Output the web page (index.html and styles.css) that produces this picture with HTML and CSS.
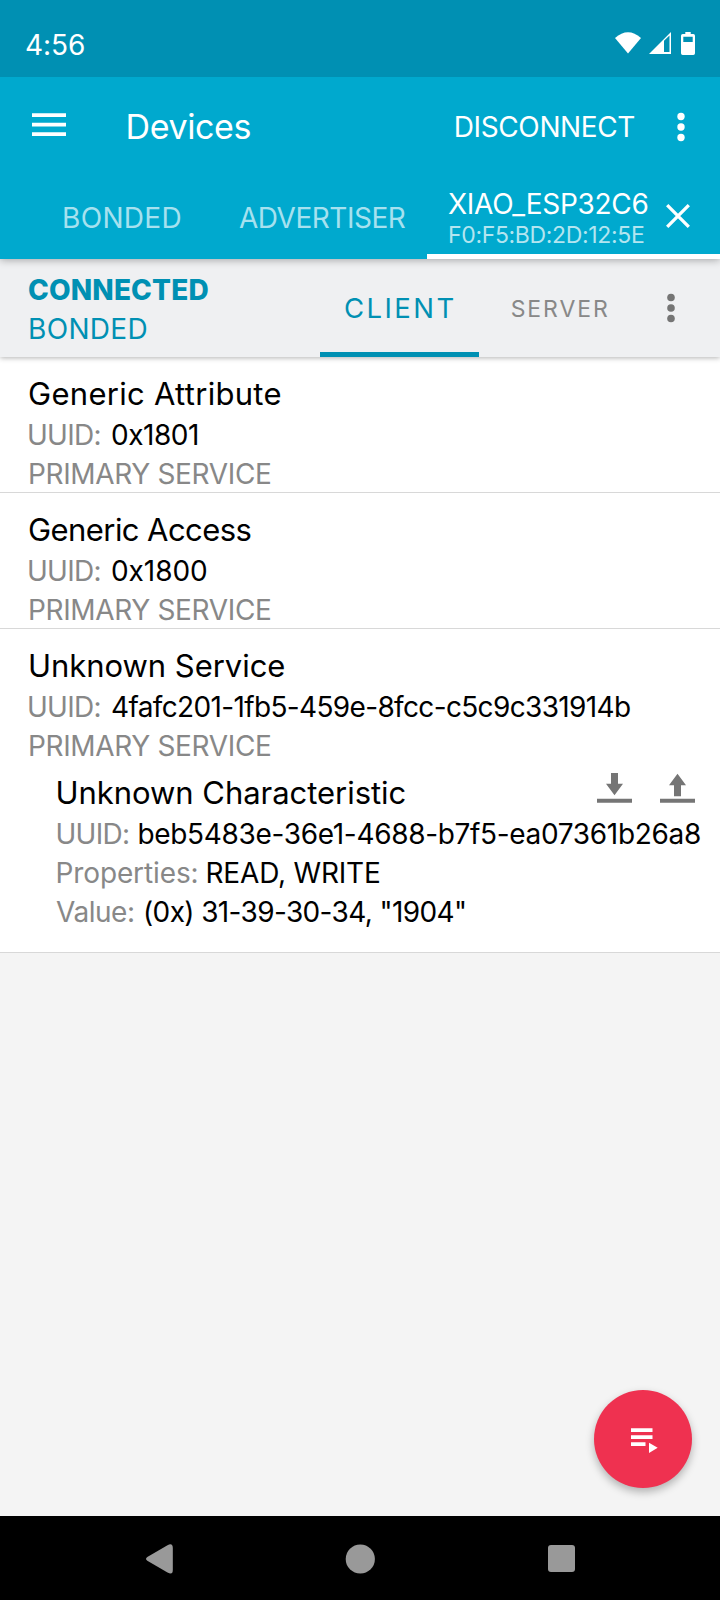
FILE: index.html
```html
<!DOCTYPE html>
<html lang="en">
<head>
<meta charset="utf-8">
<title>Devices</title>
<link rel="stylesheet" href="styles.css">
</head>
<body>
<div class="screen">
  <div class="status-bar">
    <span class="clock">4:56</span>
    <svg class="status-icons" width="82" height="24" viewBox="0 0 82 24" fill="#fff">
      <path d="M0 6Q13 -5.400 26 6L13 21.600Z"/>
      <path fill-rule="evenodd" d="M34 22L56 0V22ZM49 8.700V20H54.500V3.600Z"/>
      <path fill-rule="evenodd" d="M70.300 0H75.700V2H78.300Q80 2 80 3.700V21.300Q80 23 78.300 23H67.700Q66 23 66 21.300V3.700Q66 2 67.700 2H70.300ZM68.300 4.700V10H77.700V4.700Z"/>
    </svg>
  </div>

  <header class="header">
    <div class="toolbar">
      <svg class="menu" width="34" height="24" viewBox="0 0 34 24" fill="#fff"><path d="M0 .2H34V4H0ZM0 9.700H34V13.500H0ZM0 19.200H34V23H0Z"/></svg>
      <h1 class="title">Devices</h1>
      <span class="disconnect">DISCONNECT</span>
      <svg class="dots" width="8" height="30" viewBox="0 0 8 30" fill="#fff"><circle cx="4" cy="4.500" r="3.700"/><circle cx="4" cy="15" r="3.700"/><circle cx="4" cy="25.500" r="3.700"/></svg>
    </div>
    <nav class="tabs">
      <span class="tab bonded-tab">BONDED</span>
      <span class="tab advertiser-tab">ADVERTISER</span>
      <div class="device-tab">
        <div>
          <div class="device-name">XIAO_ESP32C6</div>
          <div class="device-mac">F0:F5:BD:2D:12:5E</div>
        </div>
        <svg class="close" width="24" height="24" viewBox="0 0 24 24" stroke="#fff" stroke-width="3.300"><path d="M1.200 1.200L22.800 22.800M22.800 1.200L1.200 22.800"/></svg>
      </div>
    </nav>
  </header>

  <section class="subheader">
    <div class="state">
      <div class="connection">CONNECTED</div>
      <div class="bond">BONDED</div>
    </div>
    <div class="mode client">CLIENT</div>
    <div class="mode server">SERVER</div>
    <svg class="dots" width="8" height="30" viewBox="0 0 8 30" fill="#757575"><circle cx="4" cy="4.500" r="3.800"/><circle cx="4" cy="15" r="3.800"/><circle cx="4" cy="25.500" r="3.800"/></svg>
  </section>

  <main class="list">
    <article class="service">
      <h2 class="name attribute">Generic Attribute</h2>
      <p class="line"><span class="label uuid">UUID:</span><span class="short-id tight">0x1801</span></p>
      <p class="line label kind">PRIMARY SERVICE</p>
    </article>
    <article class="service">
      <h2 class="name access">Generic Access</h2>
      <p class="line"><span class="label uuid">UUID:</span><span class="short-id">0x1800</span></p>
      <p class="line label kind">PRIMARY SERVICE</p>
    </article>
    <article class="service last">
      <h2 class="name">Unknown Service</h2>
      <p class="line"><span class="label uuid">UUID:</span><span class="service-id">4fafc201-1fb5-459e-8fcc-c5c9c331914b</span></p>
      <p class="line label kind">PRIMARY SERVICE</p>
      <div class="characteristic">
        <div class="char-head">
          <h3 class="name">Unknown Characteristic</h3>
          <svg class="transfer" width="98" height="30" viewBox="0 0 98 30" fill="#757575">
            <path d="M14 0H21V10.700H26L17.500 22.300L9 10.700H14ZM0 25.700H35V29.700H0Z"/>
            <path d="M80.500 .700L89 12.300H84V23.300H77V12.300H72ZM63 25.700H98V29.700H63Z"/>
          </svg>
        </div>
        <p class="line"><span class="label uuid">UUID:</span><span class="char-id">beb5483e-36e1-4688-b7f5-ea07361b26a8</span></p>
        <p class="line"><span class="label properties">Properties:</span><span class="access-modes">READ, WRITE</span></p>
        <p class="line"><span class="label value-label">Value:</span><span class="value">(0x) 31-39-30-34, "1904"</span></p>
      </div>
    </article>
  </main>

  <div class="canvas">
    <div class="fab">
      <svg width="28" height="26" viewBox="0 0 28 26" fill="#fff"><path d="M0 .300H21.500V4H0ZM0 7.300H21.500V11H0ZM0 14.300H14.500V18H0ZM18 14.700L26.700 19.800L18 25Z"/></svg>
    </div>
  </div>

  <nav class="nav-bar">
    <svg width="27" height="30" viewBox="0 0 27 30" fill="#999"><path d="M1.300 13L21.500 1.200Q26.800 -1.500 26.800 4V26Q26.800 31.500 21.500 28.500L1.300 16.800Q-1.300 14.900 1.300 13Z"/></svg>
    <svg width="30" height="30" viewBox="0 0 30 30" fill="#999"><circle cx="14.300" cy="15" r="14.600"/></svg>
    <svg width="27" height="27" viewBox="0 0 27 27" fill="#999"><rect width="27" height="27" rx="3"/></svg>
  </nav>
</div>
</body>
</html>
```

FILE: styles.css
```css
* { box-sizing: border-box; }
body { margin: 0; font-family: Inter, "Liberation Sans", sans-serif; font-size: 28px; color: #000; }
h1, h2, h3, p { margin: 0; font-weight: 400; }
svg { display: block; flex: none; overflow: visible; }
.screen { width: 720px; height: 1600px; display: flex; flex-direction: column; overflow: hidden; background: #f4f4f4; white-space: nowrap; }

.status-bar { height: 77px; flex: none; padding: 28px 23px 0 25px; display: flex; justify-content: space-between; align-items: flex-start; background: #0090b3; color: #fff; z-index: 3; }
.clock { line-height: 34px; letter-spacing: -.06px; }
.status-icons { margin-top: 4px; }

.header { flex: none; height: 182px; background: #00a9ce; color: #fff; box-shadow: 0 1px 8px rgba(0, 0, 0, .32); z-index: 2; }
.toolbar { height: 99px; display: flex; align-items: center; padding: 0 35px 0 32px; }
.menu { margin-bottom: 3px; }
.title { margin-left: 59.500px; font-size: 34px; line-height: 40px; letter-spacing: -.38px; }
.disconnect { margin-left: auto; line-height: 34px; letter-spacing: -.39px; }
.toolbar .dots { margin-left: 42px; }
.tabs { height: 83px; display: flex; padding-left: 62px; }
.tab { line-height: 85px; color: #a6e1ef; }
.bonded-tab { width: 177px; letter-spacing: .33px; }
.advertiser-tab { width: 188px; letter-spacing: -.48px; }
.device-tab { flex: 1; display: flex; padding: 12px 0 0 21px; border-bottom: 5px solid #fff; }
.device-name { line-height: 32px; letter-spacing: -.27px; }
.device-mac { font-size: 23px; line-height: 30px; letter-spacing: -.34px; color: #b3e5f0; }
.close { margin: 16px 0 0 17px; }

.subheader { flex: none; height: 98px; padding: 0 45px 0 28px; display: flex; align-items: center; background: #eff0f2; box-shadow: 0 1px 5px rgba(0, 0, 0, .3); z-index: 1; }
.state { width: 292px; padding-top: 4px; line-height: 39px; color: #0090b3; }
.connection { font-weight: 800; letter-spacing: .14px; }
.bond { letter-spacing: .33px; }
.mode { line-height: 98px; height: 98px; }
.client { width: 159px; padding-left: 24px; border-bottom: 5px solid #0090b3; color: #0090b3; font-size: 27.5px; line-height: 99px; letter-spacing: 2.45px; }
.server { padding-left: 31.700px; font-size: 23px; letter-spacing: 1.92px; line-height: 101px; color: #888; }
.subheader .dots { margin-left: auto; }

.list { flex: none; background: #fff; }
.service { height: 136px; padding: 16px 0 0 28px; border-bottom: 1px solid #d8d8d8; }
.service.last { height: 324px; }
.name { font-size: 31px; line-height: 42px; letter-spacing: -.04px; }
.attribute { letter-spacing: .29px; }
.access { letter-spacing: -.57px; }
.line { display: flex; height: 39px; line-height: 41px; }
.label { color: #888; }
.uuid { flex: none; width: 84px; margin-left: -1px; letter-spacing: -.75px; }
.short-id { letter-spacing: -.06px; }
.tight { letter-spacing: -.46px; }
.kind { letter-spacing: -.35px; }
.service-id { letter-spacing: -.65px; }
.characteristic { padding: 7px 25px 0 27.500px; }
.char-head { display: flex; justify-content: space-between; }
.transfer { margin-top: 1px; }
.characteristic .uuid { width: 82px; margin-left: 0; }
.char-id { letter-spacing: -.33px; }
.properties { width: 150px; letter-spacing: -.12px; }
.access-modes { letter-spacing: -.18px; }
.value-label { width: 87px; margin-left: .500px; letter-spacing: -.46px; }
.value { letter-spacing: -.62px; }

.canvas { flex: 1; display: flex; justify-content: flex-end; align-items: flex-end; padding: 0 28px 28px 0; }
.fab { width: 98px; height: 98px; border-radius: 50%; padding: 38px 0 0 37px; background: #ef3150; box-shadow: 0 4px 8px rgba(0, 0, 0, .28); }
.nav-bar { flex: none; height: 84px; display: flex; justify-content: space-between; align-items: center; padding: 1px 145px 0 146px; background: #000; }
```
